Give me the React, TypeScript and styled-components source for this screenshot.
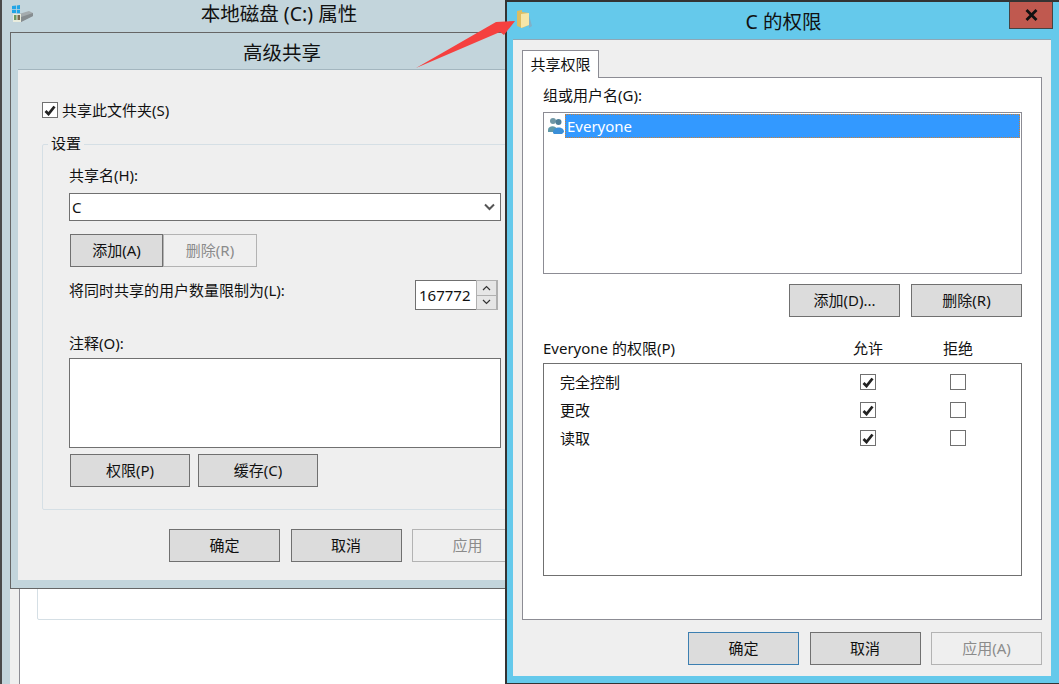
import React from 'react';
import styled, { createGlobalStyle } from 'styled-components';

const GlobalStyle = createGlobalStyle`
  html, body {
    margin: 0;
    padding: 0;
    background: #fff;
  }
  * {
    box-sizing: border-box;
  }
  body {
    font-family: "Noto Sans", "Noto Sans CJK SC", sans-serif;
    font-size: 15px;
    color: #111;
  }
`;

const Desktop = styled.div`
  position: relative;
  width: 1059px;
  height: 684px;
  overflow: hidden;
`;

/* windows sit on a free desktop, so these three are placed by coordinates */
const PropertiesWindow = styled.div`
  position: absolute;
  left: 0;
  top: 0;
  width: 556px;
  height: 700px;
  background: #c3d5dc;
  border-left: 2px solid #4a4a4a;
  display: flex;
  flex-direction: column;
`;

const ShareWindow = styled.div`
  position: absolute;
  left: 10px;
  top: 32px;
  width: 544px;
  height: 557px;
  background: #c3d5dc;
  border: 1px solid #666;
  display: flex;
  flex-direction: column;
`;

const PermissionWindow = styled.div`
  position: absolute;
  left: 505px;
  top: 0;
  width: 556px;
  height: 684px;
  background: #65c9eb;
  border: 1px solid #333;
  border-top-width: 2px;
  border-left-width: 2px;
  display: flex;
  flex-direction: column;
`;

const TitleBar = styled.div<{ $height: number }>`
  height: ${p => p.$height}px;
  flex: none;
  display: flex;
  align-items: center;
  justify-content: center;
  font-size: 19.5px;
  color: #111;
`;

const DriveIcon = styled.svg`
  position: absolute;
  left: 10px;
  top: 5px;
`;

const FolderIcon = styled.svg`
  position: absolute;
  left: 10px;
  top: 8px;
`;

const CloseButton = styled.div`
  position: absolute;
  right: 7px;
  top: 0;
  width: 44px;
  height: 27px;
  background: #c0594f;
  border: 1px solid #444;
  border-top: none;
  display: flex;
  align-items: center;
  justify-content: center;
`;

const BackPage = styled.div`
  flex: 1;
  margin: 8px 0 0 8px;
  padding-left: 9px;
  background: #efefef;
`;

const BackSheet = styled.div`
  height: 100%;
  background: #fff;
  border-left: 1px solid #8c8c94;
  padding-left: 17px;
`;

const BackGroup = styled.div`
  height: 588px;
  border: 1px solid #d5dfe5;
  border-radius: 2px;
`;

const ShareBody = styled.div`
  flex: 1;
  margin: 0 7px 8px;
  background: #efefef;
  border-top: 1px solid #a3b6bf;
  padding: 32px 0 0 24px;
`;

const CheckRow = styled.label`
  display: flex;
  align-items: center;
  gap: 4px;
  height: 16px;
  line-height: 14px;
`;

const CheckBox = styled.span`
  width: 16px;
  height: 16px;
  flex: none;
  display: flex;
  align-items: center;
  justify-content: center;
  background: #fff;
  border: 1px solid #707070;
`;

const GroupBox = styled.fieldset`
  margin: 16px 0 0;
  min-width: 0;
  padding: 11px 26px 22px 26px;
  border: 1px solid #d5dfe5;
  border-radius: 2px;
  width: 486px;
`;

const GroupLegend = styled.legend`
  margin-left: -21px;
  padding: 0 3px;
  height: 20px;
  line-height: 18px;
`;

const FieldLabel = styled.div`
  height: 20px;
  line-height: 21px;
`;

const ComboBox = styled.div`
  margin-top: 8px;
  height: 28px;
  background: #fff;
  border: 1px solid #707070;
  display: flex;
  align-items: center;
  justify-content: space-between;
  padding: 0 5px 0 2px;
`;

const Button = styled.div<{ $tone?: 'normal' | 'disabled' | 'default'; $width: number }>`
  width: ${p => p.$width}px;
  height: 33px;
  flex: none;
  padding-bottom: 3px;
  display: flex;
  align-items: center;
  justify-content: center;
  background: ${p => (p.$tone === 'disabled' ? '#efefef' : '#dcdcdc')};
  color: ${p => (p.$tone === 'disabled' ? '#8b8b8b' : '#111')};
  border: 1px solid ${p => (p.$tone === 'disabled' ? '#b3b3b3' : p.$tone === 'default' ? '#3c7fb1' : '#707070')};
`;

const ButtonRow = styled.div<{ $top: number; $gap: number }>`
  display: flex;
  gap: ${p => p.$gap}px;
  margin-top: ${p => p.$top}px;
  padding-left: 1px;
`;

const EndRow = styled.div<{ $top: number }>`
  display: flex;
  justify-content: flex-end;
  gap: 11px;
  margin-top: ${p => p.$top}px;
`;

const ShareFooter = styled(EndRow)`
  width: 481px;
  gap: 10.5px;
`;

const LimitRow = styled.div`
  display: flex;
  justify-content: space-between;
  margin-top: 13px;
  padding-right: 3px;
`;

const Spinner = styled.div`
  display: flex;
  height: 30px;
`;

const SpinValue = styled.div`
  width: 61px;
  background: #fff;
  border: 1px solid #707070;
  border-right: none;
  padding-left: 3px;
  line-height: 28px;
`;

const SpinButtons = styled.div`
  width: 22px;
  display: flex;
  flex-direction: column;
  gap: 1px;
  background: #b0b0b0;
  padding: 1px 2px 1px 1px;
`;

const SpinArrow = styled.div`
  flex: 1;
  display: flex;
  align-items: center;
  justify-content: center;
  background: #e6e6e6;
`;

const CommentLabel = styled(FieldLabel)`
  margin-top: 23px;
`;

const CommentBox = styled.div`
  margin-top: 5px;
  height: 90px;
  background: #fff;
  border: 1px solid #707070;
`;

const PermissionBody = styled.div`
  flex: 1;
  margin: 0 9px 8px 6px;
  background: #efefef;
  border-top: 1px solid #8fa7b5;
  padding: 10px 9px 11px 9px;
  display: flex;
  flex-direction: column;
`;

const Tab = styled.div`
  width: 77px;
  height: 28px;
  margin-bottom: -1px;
  padding-bottom: 2px;
  z-index: 1;
  background: #fff;
  border: 1px solid #8c8c94;
  border-bottom: none;
  display: flex;
  align-items: center;
  justify-content: center;
`;

const TabPanel = styled.div`
  height: 543px;
  background: #fff;
  border: 1px solid #8c8c94;
  padding: 7px 19px 0 20px;
`;

const UserList = styled.div`
  margin-top: 7px;
  height: 162px;
  border: 1px solid #8c8c94;
  padding: 1px 1px 0 4px;
  display: flex;
  align-items: flex-start;
`;

const UserIcon = styled.svg`
  flex: none;
  margin-top: 3px;
`;

const SelectedUser = styled.div`
  flex: 1;
  height: 24px;
  background: #3399ff;
  color: #fff;
  outline: 1px dotted #c9803a;
  outline-offset: -1px;
  padding-left: 2px;
  line-height: 25px;
`;

const grid = `
  display: grid;
  grid-template-columns: 1fr 90px 90px;
  align-items: center;
`;

const PermissionHeader = styled.div`
  ${grid}
  height: 20px;
  margin-top: 20px;
  padding-right: 19px;
`;

const ColumnTitle = styled.div`
  text-align: center;
`;

const PermissionTable = styled.div`
  margin-top: 6px;
  height: 213px;
  border: 1px solid #707070;
  padding: 4px 18px 0 16px;
`;

const PermissionRow = styled.div`
  ${grid}
  height: 28px;
`;

const PermissionName = styled.div`
  padding-bottom: 2px;
`;

const BoxCell = styled.div`
  display: flex;
  justify-content: center;
`;

const PermissionFooter = styled(EndRow)`
  gap: 10.5px;
`;

const Arrow = styled.svg`
  position: absolute;
  left: 410px;
  top: 15px;
`;

const Tick = () => (
  <svg width="12" height="11" viewBox="0 0 12 11">
    <path d="M1.500 6 L4.500 9 L10.500 1.500" fill="none" stroke="#222" strokeWidth="2.800" />
  </svg>
);

const Chevron = ({ up }: { up?: boolean }) => (
  <svg width="9" height="6" viewBox="0 0 9 6">
    <path d={up ? 'M1 5 L4.500 1.500 L8 5' : 'M1 1 L4.500 4.500 L8 1'} fill="none" stroke="#333" strokeWidth="1.200" />
  </svg>
);

const ComboChevron = () => (
  <svg width="11" height="8" viewBox="0 0 11 8">
    <path d="M1 1.500 L5.500 6 L10 1.500" fill="none" stroke="#555" strokeWidth="2" />
  </svg>
);

const permissions = ['完全控制', '更改', '读取'];

export default function App() {
  return (
    <Desktop>
      <GlobalStyle />

      <PropertiesWindow>
        <DriveIcon width="22" height="18" viewBox="0 0 22 18">
          <path d="M0 1 L4 .500 V4 H0z M4.800 .400 L8 0 V4 H4.800z M0 4.700 H4 V8 H0z M4.800 4.700 H8 V8.300 H4.800z" fill="#21a5e6" />
          <path d="M7 9 L17 6 L21 8 V11 L9 17 H7z" fill="#a4abae" />
          <path d="M9 12 L21 8 V11 L9 17z" fill="#868d90" />
          <rect x="1" y="9" width="8" height="8" fill="#e9ecdd" />
          <rect x="2" y="10" width="2.500" height="5" fill="#6f9a63" />
          <rect x="5.500" y="10" width="2.500" height="5" fill="#7c6a4c" />
        </DriveIcon>
        <TitleBar $height={24}>本地磁盘 (C:) 属性</TitleBar>
        <BackPage>
          <BackSheet>
            <BackGroup />
          </BackSheet>
        </BackPage>
      </PropertiesWindow>

      <ShareWindow>
        <TitleBar $height={36}>高级共享</TitleBar>
        <ShareBody>
          <CheckRow>
            <CheckBox><Tick /></CheckBox>
            共享此文件夹(S)
          </CheckRow>
          <GroupBox>
            <GroupLegend>设置</GroupLegend>
            <FieldLabel>共享名(H):</FieldLabel>
            <ComboBox>
              C
              <ComboChevron />
            </ComboBox>
            <ButtonRow $top={13} $gap={0}>
              <Button $width={93}>添加(A)</Button>
              <Button $width={94} $tone="disabled">删除(R)</Button>
            </ButtonRow>
            <LimitRow>
              <FieldLabel>将同时共享的用户数量限制为(L):</FieldLabel>
              <Spinner>
                <SpinValue>167772</SpinValue>
                <SpinButtons>
                  <SpinArrow><Chevron up /></SpinArrow>
                  <SpinArrow><Chevron /></SpinArrow>
                </SpinButtons>
              </Spinner>
            </LimitRow>
            <CommentLabel>注释(O):</CommentLabel>
            <CommentBox />
            <ButtonRow $top={6} $gap={8}>
              <Button $width={120}>权限(P)</Button>
              <Button $width={120}>缓存(C)</Button>
            </ButtonRow>
          </GroupBox>
          <ShareFooter $top={19}>
            <Button $width={111}>确定</Button>
            <Button $width={111}>取消</Button>
            <Button $width={111} $tone="disabled">应用</Button>
          </ShareFooter>
        </ShareBody>
      </ShareWindow>

      <PermissionWindow>
        <FolderIcon width="16" height="20" viewBox="0 0 16 20">
          <path d="M12 5 L15 16 L12 18z" fill="#7fb0c8" />
          <path d="M0 1 L5 0 V2 L12 3 V15 L5 18 L0 16z" fill="#dcbd62" />
          <path d="M4 4 L12 3 V15 L4 18z" fill="#f6e6a8" />
        </FolderIcon>
        <TitleBar $height={37}>C 的权限</TitleBar>
        <CloseButton>
          <svg width="13" height="12" viewBox="0 0 13 12">
            <path d="M1.500 1 L11.500 11 M11.500 1 L1.500 11" stroke="#111" strokeWidth="2.800" />
          </svg>
        </CloseButton>
        <PermissionBody>
          <Tab>共享权限</Tab>
          <TabPanel>
            <FieldLabel>组或用户名(G):</FieldLabel>
            <UserList>
              <UserIcon width="17" height="18" viewBox="0 0 17 18">
                <circle cx="5" cy="4" r="3" fill="#6f97a6" />
                <circle cx="10.500" cy="5" r="3" fill="#4f7f98" />
                <path d="M0 13 C0 8 9 8 9 13 V15 H0z" fill="#5f98a8" />
                <path d="M5 16 C5 9 16 9 16 15 L14 17 H6z" fill="#3a8fd8" />
              </UserIcon>
              <SelectedUser>Everyone</SelectedUser>
            </UserList>
            <EndRow $top={10}>
              <Button $width={111}>添加(D)...</Button>
              <Button $width={111}>删除(R)</Button>
            </EndRow>
            <PermissionHeader>
              <div>Everyone 的权限(P)</div>
              <ColumnTitle>允许</ColumnTitle>
              <ColumnTitle>拒绝</ColumnTitle>
            </PermissionHeader>
            <PermissionTable>
              {permissions.map(name => (
                <PermissionRow key={name}>
                  <PermissionName>{name}</PermissionName>
                  <BoxCell><CheckBox><Tick /></CheckBox></BoxCell>
                  <BoxCell><CheckBox /></BoxCell>
                </PermissionRow>
              ))}
            </PermissionTable>
          </TabPanel>
          <PermissionFooter $top={12}>
            <Button $width={111} $tone="default">确定</Button>
            <Button $width={111}>取消</Button>
            <Button $width={111} $tone="disabled">应用(A)</Button>
          </PermissionFooter>
        </PermissionBody>
      </PermissionWindow>

      <Arrow width="110" height="60" viewBox="410 15 110 60">
        <path d="M416 68 L496 22 L515 21 L504 35 L500 32z" fill="#f5403f" />
      </Arrow>
    </Desktop>
  );
}
